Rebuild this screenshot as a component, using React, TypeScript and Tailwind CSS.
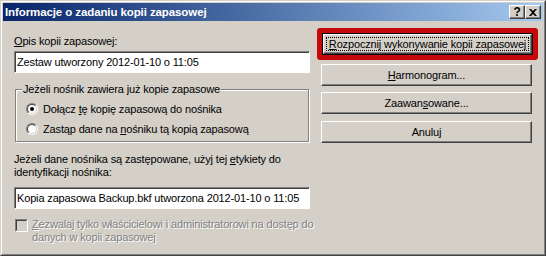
import type { ReactNode } from "react";

function Btn({ children, focused = false }: { children: ReactNode; focused?: boolean }) {
  if (focused) {
    return (
      <div className="h-[22px] w-[211px] border border-black">
        <div className="h-full border border-t-white border-l-white border-r-[#404040] border-b-[#404040] shadow-[inset_-1px_-1px_#808080] p-[2px]">
          <div className="flex h-full items-center justify-center whitespace-nowrap border border-dotted border-black">{children}</div>
        </div>
      </div>
    );
  }
  return (
    <div className="flex h-[22px] w-[211px] items-center justify-center whitespace-nowrap border border-t-white border-l-white border-r-[#404040] border-b-[#404040] shadow-[inset_-1px_-1px_#808080]">
      {children}
    </div>
  );
}

function Field({ value }: { value: string }) {
  return (
    <div className="flex h-[22px] w-[296px] items-center overflow-hidden whitespace-nowrap border border-t-[#808080] border-l-[#808080] border-r-white border-b-white bg-white pl-[2px] shadow-[inset_1px_1px_#404040]">
      {value}
    </div>
  );
}

function Radio({ checked }: { checked?: boolean }) {
  return (
    <div className="h-[12px] w-[12px] shrink-0 rounded-full border border-t-[#808080] border-l-[#808080] border-r-white border-b-white">
      <div className="flex h-full w-full items-center justify-center rounded-full border border-t-[#404040] border-l-[#404040] border-r-[#d4d0c8] border-b-[#d4d0c8] bg-white">
        {checked && <div className="h-[4px] w-[4px] rounded-full bg-black" />}
      </div>
    </div>
  );
}

export default function App() {
  return (
    <div className="h-[256px] w-[546px] overflow-hidden border border-t-[#d4d0c8] border-l-[#d4d0c8] border-r-[#404040] border-b-[#404040] bg-[#d4d0c8] font-['Liberation_Sans',Arial,sans-serif] text-[11px] leading-[13px] tracking-[-0.15px] text-black">
      <div className="flex h-full flex-col border border-t-white border-l-white border-r-[#808080] border-b-[#808080] p-px">
        {/* title bar */}
        <div className="flex h-[18px] shrink-0 items-center bg-linear-to-r from-[#0a246a] to-[#a6caf0] pl-[2px] pr-[2px]">
          <span className="flex-1 text-[11.5px] font-bold tracking-[-0.1px] text-white">Informacje o zadaniu kopii zapasowej</span>
          <div className="flex h-[14px] w-[16px] items-center justify-center border border-t-white border-l-white border-r-[#404040] border-b-[#404040] bg-[#d4d0c8] text-[12px] font-bold leading-none shadow-[inset_-1px_-1px_#808080]">
            ?
          </div>
          <div className="flex h-[14px] w-[16px] items-center justify-center border border-t-white border-l-white border-r-[#404040] border-b-[#404040] bg-[#d4d0c8] shadow-[inset_-1px_-1px_#808080]">
            <svg width="8" height="7" viewBox="0 0 8 7">
              <path d="M0 0h2l2 2 2-2h2L5 3.5 8 7H6L4 5 2 7H0l3-3.5z" fill="#000" />
            </svg>
          </div>
        </div>

        <div className="flex flex-1 pl-[11px]">
          {/* left column */}
          <div className="flex w-[296px] flex-col pt-[14px]">
            <div>
              <span className="underline">O</span>pis kopii zapasowej:
            </div>
            <div className="mt-[3px]">
              <Field value="Zestaw utworzony 2012-01-10 o 11:05" />
            </div>

            <div className="relative ml-px mt-[16px] h-[53px] w-[294px] border border-[#808080] pl-[10px] pt-[9px] shadow-[inset_1px_1px_#fff,1px_1px_#fff]">
              <span className="absolute -top-[7px] left-[6px] bg-[#d4d0c8] px-[1px]">Jeżeli nośnik zawiera już kopie zapasowe</span>
              <div className="flex h-[20px] items-center gap-[5px]">
                <Radio checked />
                <span>
                  Dołącz <span className="underline">t</span>ę kopię zapasową do nośnika
                </span>
              </div>
              <div className="flex h-[20px] items-center gap-[5px]">
                <Radio />
                <span>
                  Zastąp dane na <span className="underline">n</span>ośniku tą kopią zapasową
                </span>
              </div>
            </div>

            <div className="mt-[11px] whitespace-nowrap">
              Jeżeli dane nośnika są zastępowane, użyj tej <span className="underline">e</span>tykiety do
              <br />
              identyfikacji nośnika:
            </div>
            <div className="mt-[8px]">
              <Field value="Kopia zapasowa Backup.bkf utworzona 2012-01-10 o 11:05" />
            </div>

            <div className="mt-[9px] flex gap-[4px] pl-[1px]">
              <div className="mt-px h-[13px] w-[13px] shrink-0 border border-t-[#808080] border-l-[#808080] border-r-white border-b-white">
                <div className="h-full w-full border border-t-[#404040] border-l-[#404040] border-r-[#d4d0c8] border-b-[#d4d0c8]" />
              </div>
              <div className="whitespace-nowrap text-[#808080] [text-shadow:1px_1px_0_#fff]">
                <span className="underline">Z</span>ezwalaj tylko właścicielowi i administratorowi na dostęp do
                <br />
                danych w kopii zapasowej
              </div>
            </div>
          </div>

          {/* right column */}
          <div className="ml-[7px] flex w-[221px] flex-col pt-[7px]">
            <div className="h-[32px] rounded-[3px] border-[5px] border-[#c8070b]">
              <Btn focused>
                <span>
                  <span className="underline">R</span>ozpocznij wykonywanie kopii zapasowej
                </span>
              </Btn>
            </div>
            <div className="ml-[4px] mt-[4px]">
              <Btn>
                <span>
                  <span className="underline">H</span>armonogram...
                </span>
              </Btn>
            </div>
            <div className="ml-[4px] mt-[6px]">
              <Btn>
                <span>
                  Zaawan<span className="underline">s</span>owane...
                </span>
              </Btn>
            </div>
            <div className="ml-[4px] mt-[7px]">
              <Btn>Anuluj</Btn>
            </div>
          </div>
        </div>
      </div>
    </div>
  );
}
